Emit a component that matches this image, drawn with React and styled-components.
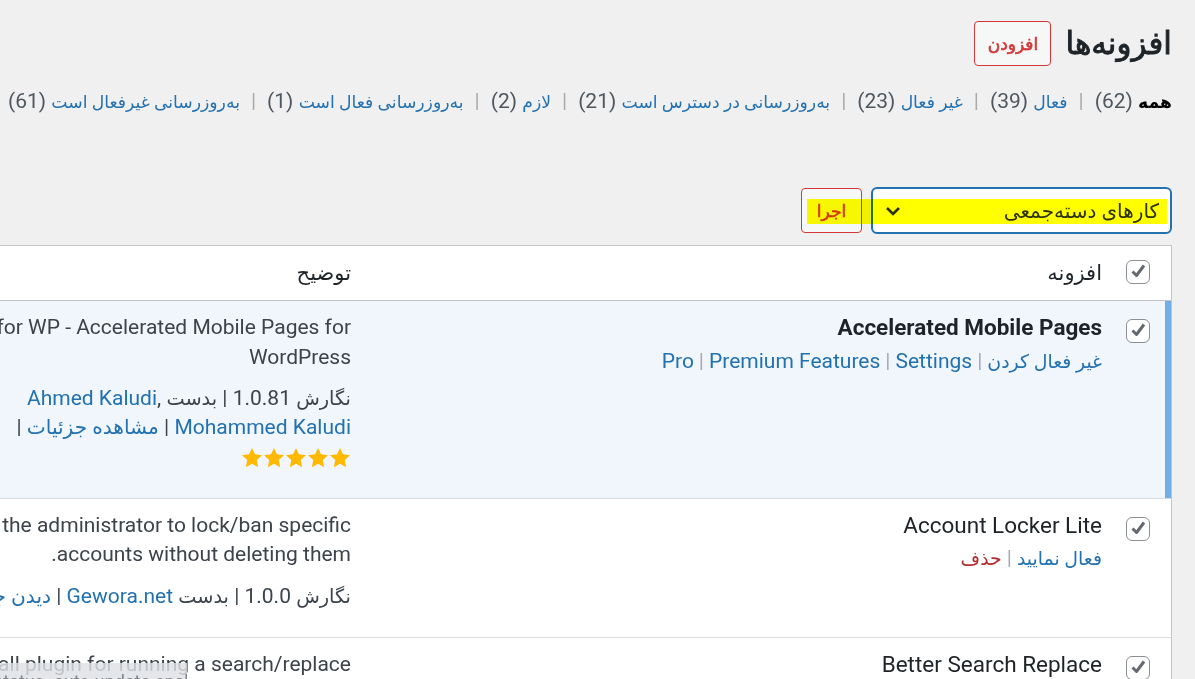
import React from "react";
import styled, { createGlobalStyle } from "styled-components";

const GlobalStyle = createGlobalStyle`
  html, body { margin: 0; padding: 0; height: 100%; background: #f0f0f1; overflow: hidden; }
  body { font-family: Roboto, "DejaVu Sans", sans-serif; color: #3c434a; }
  #root { height: 100%; }
  * { box-sizing: border-box; }
`;

const Page = styled.div`
  position: relative;
  direction: rtl;
  width: 100vw;
  height: 100vh;
  overflow: hidden;
  padding-right: 23px;
`;

const Wrap = styled.div`
  width: 1340px;
`;

const TitleBar = styled.div`
  display: flex;
  align-items: center;
  gap: 14px;
  padding-top: 21px;
`;

const Title = styled.h1`
  margin: 0;
  font-size: 31px;
  line-height: 45px;
  font-weight: 400;
  color: #1d2327;
  -webkit-text-stroke: 0.9px #1d2327;
`;

const OutlineButton = styled.a`
  display: inline-flex;
  align-items: center;
  justify-content: center;
  height: ${(p) => p.h}px;
  width: ${(p) => p.w}px;
  border: 1px solid #d63638;
  border-radius: 4px;
  background: #f6f7f7;
  color: #d63638;
  font-size: 17px;
  font-weight: 400;
  -webkit-text-stroke: 0.6px #d63638;
  text-decoration: none;
  flex: none;
`;

const Fa = styled.span`
  font-size: ${(p) => p.size}em;
`;

const Filters = styled.ul`
  list-style: none;
  margin: 21px 0 0;
  padding: 0;
  font-size: 21px;
  line-height: 29px;
  white-space: nowrap;
`;

const FilterItem = styled.li`
  display: inline;
`;

const FilterLink = styled.a`
  color: ${(p) => (p.current ? "#000" : "#2271b1")};
  font-weight: ${(p) => (p.current ? 700 : 400)};
  text-decoration: none;
`;

const Count = styled.span`
  color: #50575e;
  font-weight: 400;
`;

const FilterSep = styled.span`
  display: inline-block;
  margin: 0 11px;
  color: #a7aaad;
`;

const BulkRow = styled.div`
  position: relative;
  display: flex;
  align-items: center;
  gap: 9px;
  height: 47px;
  margin-top: 70px;
`;

const SelectBox = styled.div`
  display: flex;
  align-items: center;
  justify-content: space-between;
  width: 301px;
  height: 47px;
  padding: 0 11px 0 12px;
  border: 2px solid #2271b1;
  border-radius: 6px;
  background: #fff;
  color: #2c3338;
  font-size: 20px;
  flex: none;
`;

const Highlight = styled.span`
  position: absolute;
  top: 12px;
  right: 5px;
  width: 360px;
  height: 25px;
  background: #ffff00;
  mix-blend-mode: multiply;
  pointer-events: none;
`;

const Table = styled.table`
  width: 1257px;
  margin-top: 11px;
  table-layout: fixed;
  border-collapse: separate;
  border-spacing: 0;
  border: 1px solid #c3c4c7;
  background: #fff;
`;

const Col = styled.col`
  width: ${(p) => p.w}px;
`;

const HeadCell = styled.th`
  padding: 12.5px 15px;
  text-align: right;
  font-weight: 400;
  font-size: 21px;
  line-height: 29.25px;
  color: #1d2327;
  border-bottom: 1px solid #c3c4c7;
`;

const CheckCell = styled.th`
  padding: ${(p) => (p.head ? 14 : 18)}px 21px 0 0;
  vertical-align: top;
  text-align: right;
  background: ${(p) => (p.active ? "#f0f6fc" : "#fff")};
  border-bottom: 1px solid ${(p) => (p.head ? "#c3c4c7" : "#dcdcde")};
  box-shadow: ${(p) => (p.active ? "inset -6px 0 0 #72aee6" : "none")};
`;

const BodyCell = styled.td`
  padding: 12px 15px 26.5px;
  vertical-align: top;
  font-size: 21px;
  line-height: 29.25px;
  color: #3c434a;
  background: ${(p) => (p.active ? "#f0f6fc" : "#fff")};
  border-bottom: 1px solid #dcdcde;
  white-space: ${(p) => (p.nowrap ? "nowrap" : "normal")};
`;

const Box = styled.span`
  display: inline-block;
  width: 24px;
  height: 24px;
  border: 1.5px solid #8c8f94;
  border-radius: 6px;
  background: #fff;
  vertical-align: top;
  svg { display: block; }
`;

const PluginName = styled.strong`
  display: block;
  font-size: 22.5px;
  line-height: 29.25px;
  font-weight: ${(p) => (p.active ? 700 : 400)};
  color: #1d2327;
  margin-bottom: 4px;
`;

const RowActions = styled.div`
  font-size: 21px;
  line-height: 29.25px;
  color: #a7aaad;
`;

const Action = styled.span`
  unicode-bidi: isolate;
`;

const ActionSep = styled.span`
  display: inline-block;
  margin: 0 5px;
  color: #a7aaad;
`;

const Link = styled.a`
  color: ${(p) => (p.danger ? "#b32d2e" : "#2271b1")};
  text-decoration: none;
`;

const Desc = styled.p`
  margin: 0 0 12px;
`;

const Meta = styled.div``;

const Stars = styled.span`
  display: inline-flex;
  gap: 0;
  vertical-align: -6px;
`;

const StatusBubble = styled.div`
  position: absolute;
  left: 0;
  top: 663px;
  width: 187px;
  height: 30px;
  overflow: hidden;
  direction: ltr;
  white-space: nowrap;
  background: rgba(222, 224, 228, 0.82);
  color: #80868b;
  font-size: 18px;
  line-height: 20px;
  padding-top: 9px;
  text-indent: -6px;
`;

const Check = () => (
  <Box>
    <svg width="21" height="21" viewBox="0 0 21 21">
      <polyline
        points="4.5,10.5 8.5,14.5 16,4.5"
        fill="none"
        stroke="#646970"
        strokeWidth="3"
        strokeLinejoin="round"
      />
    </svg>
  </Box>
);

const Star = () => (
  <svg width="22" height="22" viewBox="0 0 20 20">
    <path fill="#ffb900" d="M10 .8l2.7 5.9 6.4.8-4.8 4.4 1.3 6.5L10 15.2l-5.6 3.2 1.3-6.5L.9 7.5l6.4-.8z" />
  </svg>
);

const Chevron = () => (
  <svg width="16" height="10" viewBox="0 0 16 10">
    <polyline points="2,2 8,8 14,2" fill="none" stroke="#2c3338" strokeWidth="2.6" />
  </svg>
);

const filters = [
  { label: "همه", count: 62, current: true },
  { label: "فعال", count: 39 },
  { label: "غیر فعال", count: 23 },
  { label: "به‌روزرسانی در دسترس است", count: 21 },
  { label: "لازم", count: 2 },
  { label: "به‌روزرسانی فعال است", count: 1 },
  { label: "به‌روزرسانی غیرفعال است", count: 61 },
];

const Actions = ({ items }) => (
  <RowActions>
    {items.map((it, i) => (
      <React.Fragment key={it.label}>
        {i > 0 && <ActionSep>|</ActionSep>}
        <Action>
          <Link danger={it.danger}>{it.fa ? <Fa size={0.9}>{it.label}</Fa> : it.label}</Link>
        </Action>
      </React.Fragment>
    ))}
  </RowActions>
);

export default function App() {
  return (
    <>
      <GlobalStyle />
      <Page>
        <Wrap>
          <TitleBar>
            <Title>افزونه‌ها</Title>
            <OutlineButton w={77} h={45}>افزودن</OutlineButton>
          </TitleBar>

          <Filters>
            {filters.map((f, i) => (
              <FilterItem key={f.label}>
                {i > 0 && <FilterSep>|</FilterSep>}
                <FilterLink current={f.current}>
                  <Fa size={0.82}>{f.label}</Fa> <Count>({f.count})</Count>
                </FilterLink>
              </FilterItem>
            ))}
          </Filters>

          <BulkRow>
            <SelectBox>
              <span>کارهای دسته‌جمعی</span>
              <Chevron />
            </SelectBox>
            <OutlineButton w={61} h={45}>اجرا</OutlineButton>
            <Highlight />
          </BulkRow>

          <Table>
            <colgroup>
              <Col w={54} />
              <Col w={751} />
              <Col w={450} />
            </colgroup>
            <thead>
              <tr>
                <CheckCell head>
                  <Check />
                </CheckCell>
                <HeadCell>افزونه</HeadCell>
                <HeadCell>توضیح</HeadCell>
              </tr>
            </thead>
            <tbody>
              <tr>
                <CheckCell active>
                  <Check />
                </CheckCell>
                <BodyCell active nowrap>
                  <PluginName active>Accelerated Mobile Pages</PluginName>
                  <Actions
                    items={[
                      { label: "غیر فعال کردن", fa: true },
                      { label: "Settings" },
                      { label: "Premium Features" },
                      { label: "Pro" },
                    ]}
                  />
                </BodyCell>
                <BodyCell active>
                  <Desc>AMP for WP - Accelerated Mobile Pages for WordPress</Desc>
                  <Meta>
                    <Fa size={0.92}>نگارش</Fa> 1.0.81 | <Fa size={0.92}>بدست</Fa> <Link>Ahmed Kaludi</Link>,{" "}
                    <Link>Mohammed Kaludi</Link> | <Link><Fa size={0.96}>مشاهده جزئیات</Fa></Link> |{" "}
                    <Stars>
                      <Star />
                      <Star />
                      <Star />
                      <Star />
                      <Star />
                    </Stars>
                  </Meta>
                </BodyCell>
              </tr>
              <tr>
                <CheckCell>
                  <Check />
                </CheckCell>
                <BodyCell nowrap>
                  <PluginName>Account Locker Lite</PluginName>
                  <Actions
                    items={[
                      { label: "فعال نمایید", fa: true },
                      { label: "حذف", danger: true, fa: true },
                    ]}
                  />
                </BodyCell>
                <BodyCell>
                  <Desc>Allows the administrator to lock/ban specific accounts without deleting them.</Desc>
                  <Meta>
                    <Fa size={0.92}>نگارش</Fa> 1.0.0 | <Fa size={0.92}>بدست</Fa> <Link>Gewora.net</Link> |{" "}
                    <Link><Fa size={0.96}>دیدن جزئیات</Fa></Link>
                  </Meta>
                </BodyCell>
              </tr>
              <tr>
                <CheckCell>
                  <Check />
                </CheckCell>
                <BodyCell nowrap>
                  <PluginName>Better Search Replace</PluginName>
                  <Actions
                    items={[
                      { label: "فعال نمایید", fa: true },
                      { label: "حذف", danger: true, fa: true },
                    ]}
                  />
                </BodyCell>
                <BodyCell>
                  <Desc>A small plugin for running a search/replace on your WordPress database.</Desc>
                  <Meta>
                    <Fa size={0.92}>نگارش</Fa> 1.4.7 | <Fa size={0.92}>بدست</Fa> <Link>WP Engine</Link> |{" "}
                    <Link><Fa size={0.96}>مشاهده جزئیات</Fa></Link>
                  </Meta>
                </BodyCell>
              </tr>
            </tbody>
          </Table>
        </Wrap>
        <StatusBubble>status=auto-update-enabled</StatusBubble>
      </Page>
    </>
  );
}
